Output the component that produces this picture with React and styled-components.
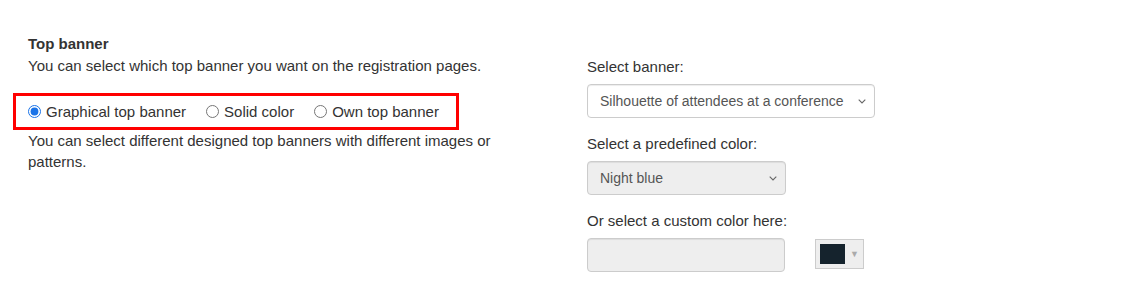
import React from 'react';
import styled, { createGlobalStyle } from 'styled-components';

const GlobalStyle = createGlobalStyle`
  body {
    margin: 0;
    background: #fff;
    font-family: "Liberation Sans", Arial, sans-serif;
    font-size: 15px;
    line-height: 22px;
    color: #333;
  }
`;

const Page = styled.div`
  display: grid;
  grid-template-columns: 559px 400px;
  padding: 33px 0 0 28px;
`;

const Column = styled.div`
  display: flex;
  flex-direction: column;
`;

const Heading = styled.div`
  font-weight: bold;
`;

const Text = styled.p`
  margin: 0;
  line-height: ${p => p.lh || '22px'};
  max-width: ${p => p.max || 'none'};
`;

const Highlight = styled.div`
  display: flex;
  align-items: center;
  gap: 20px;
  width: 446px;
  box-sizing: border-box;
  height: 37px;
  margin: 16px 0 0 -15px;
  padding: 0 0 0 12px;
  border: 3px solid #f00;
`;

const RadioLabel = styled.label`
  display: flex;
  align-items: center;
  gap: 5px;
  margin: 0;
`;

const Radio = styled.input`
  width: 13px;
  height: 13px;
  margin: 0;
  accent-color: #1a73e8;
`;

const RightColumn = styled(Column)`
  padding-top: 23px;
`;

const FieldLabel = styled.div`
  margin-bottom: 6px;
`;

const SelectWrap = styled.div`
  position: relative;
  width: ${p => p.w};
  margin-bottom: 15px;
`;

const Select = styled.select`
  appearance: none;
  display: block;
  width: 100%;
  height: 34px;
  box-sizing: border-box;
  padding: 0 24px 0 12px;
  font-family: inherit;
  font-size: 14px;
  color: #555;
  background: ${p => (p.disabled ? '#eee' : '#fff')};
  border: 1px solid #ccc;
  border-radius: 4px;
  box-shadow: inset 0 1px 1px rgba(0, 0, 0, 0.075);
  opacity: 1;
`;

const Chevron = styled.svg`
  position: absolute;
  right: 9px;
  top: 15px;
  pointer-events: none;
`;

const ColorRow = styled.div`
  display: flex;
  align-items: flex-start;
  gap: 30px;
`;

const Input = styled.input`
  width: 198px;
  height: 34px;
  box-sizing: border-box;
  background: #eee;
  border: 1px solid #ccc;
  border-radius: 4px;
  box-shadow: inset 0 1px 1px rgba(0, 0, 0, 0.075);
  margin: 0;
`;

const Swatch = styled.div`
  display: flex;
  align-items: center;
  gap: 5px;
  box-sizing: border-box;
  width: 49px;
  height: 30px;
  margin-top: 1px;
  padding: 0 0 0 4px;
  background: #eee;
  border: 1px solid #ccc;
`;

const SwatchColor = styled.div`
  width: 25px;
  height: 20px;
  background: ${p => p.color};
`;

const SwatchArrow = styled.span`
  font-size: 9px;
  line-height: 10px;
  color: #aaa;
`;

const Dropdown = ({ w, disabled, children }) => (
  <SelectWrap w={w}>
    <Select disabled={disabled}>{children}</Select>
    <Chevron width="8" height="5" viewBox="0 0 8 5">
      <path d="M0.7 0.7 L4 4 L7.3 0.7" fill="none" stroke="#666" strokeWidth="1.1" />
    </Chevron>
  </SelectWrap>
);

export default function App() {
  return (
    <>
      <GlobalStyle />
      <Page>
        <Column>
          <Heading>Top banner</Heading>
          <Text>You can select which top banner you want on the registration pages.</Text>
          <Highlight>
            <RadioLabel>
              <Radio type="radio" name="banner" defaultChecked />
              Graphical top banner
            </RadioLabel>
            <RadioLabel>
              <Radio type="radio" name="banner" />
              Solid color
            </RadioLabel>
            <RadioLabel>
              <Radio type="radio" name="banner" />
              Own top banner
            </RadioLabel>
          </Highlight>
          <Text lh="21px" max="470px">
            You can select different designed top banners with different images or patterns.
          </Text>
        </Column>
        <RightColumn>
          <FieldLabel>Select banner:</FieldLabel>
          <Dropdown w="288px">
            <option>Silhouette of attendees at a conference</option>
          </Dropdown>
          <FieldLabel>Select a predefined color:</FieldLabel>
          <Dropdown w="199px" disabled>
            <option>Night blue</option>
          </Dropdown>
          <FieldLabel>Or select a custom color here:</FieldLabel>
          <ColorRow>
            <Input type="text" disabled />
            <Swatch>
              <SwatchColor color="#15232d" />
              <SwatchArrow>▼</SwatchArrow>
            </Swatch>
          </ColorRow>
        </RightColumn>
      </Page>
    </>
  );
}
